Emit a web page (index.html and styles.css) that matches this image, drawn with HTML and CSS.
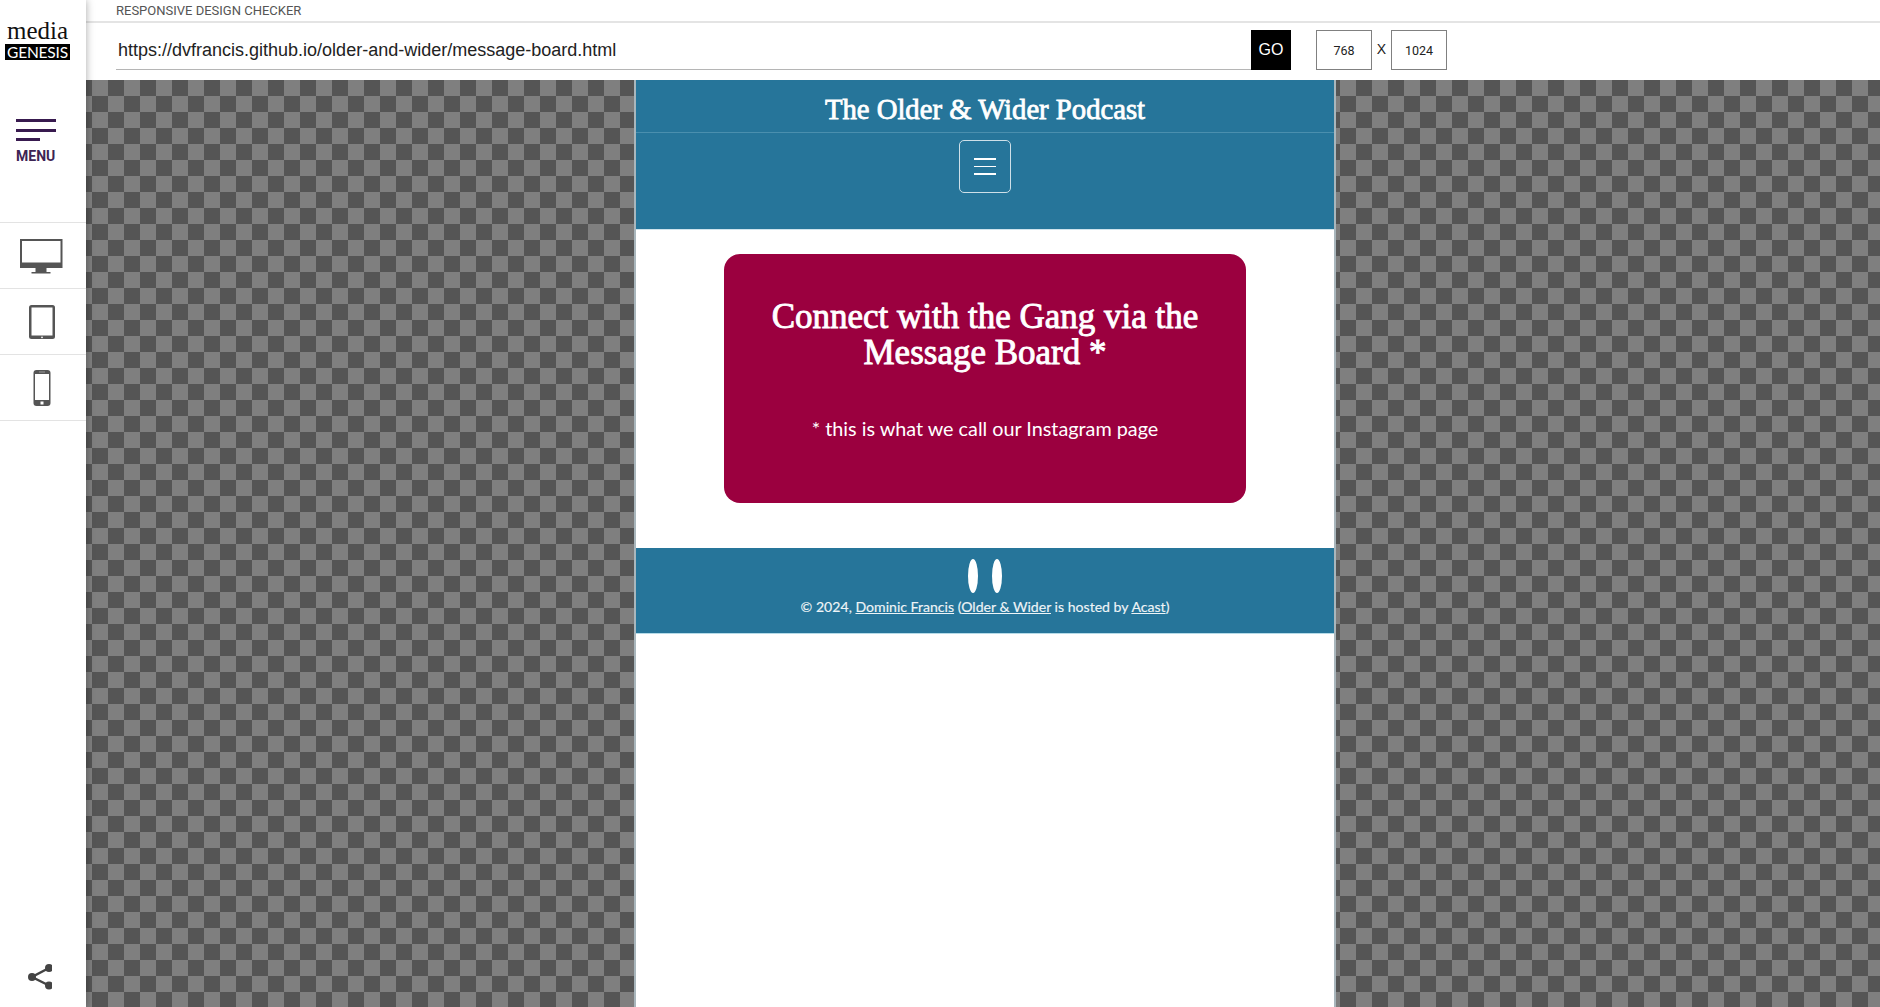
FILE: index.html
```html
<!DOCTYPE html>
<html lang="en">
<head>
<meta charset="utf-8">
<title>Responsive Design Checker</title>
<link rel="stylesheet" href="styles.css">
</head>
<body>
<div class="app">
  <aside class="sidebar">
    <div class="logo">
      <div class="logo-media">media</div>
      <div class="logo-genesis">GENESIS</div>
    </div>
    <button class="menu" type="button">
      <span class="bar"></span>
      <span class="bar"></span>
      <span class="bar short"></span>
      <span class="menu-label">MENU</span>
    </button>
    <nav class="devices">
      <div class="device">
        <svg width="44" height="38" viewBox="1 -1 44 38"><path fill="#555" d="M1 1h42.500v29H27.500v4h4v1.500h-19V34h4v-4H1z"/><path fill="#fff" d="M3 3h38.500v21.500H3z"/></svg>
      </div>
      <div class="device">
        <svg width="28" height="36" viewBox="0 0 28 36"><rect x="1" y="1" width="26" height="34" rx="2.500" fill="#555"/><rect x="3.500" y="3.500" width="21" height="28" fill="#fff"/><circle cx="14" cy="33.300" r="0.900" fill="#fff"/></svg>
      </div>
      <div class="device">
        <svg width="20" height="38" viewBox="0 0 20 38"><rect x="1.500" y="1" width="17" height="36" rx="3" fill="#555"/><rect x="3" y="5" width="14" height="26" fill="#fff"/><rect x="7" y="2.500" width="6" height="1" fill="#999"/><rect x="8.500" y="32.500" width="3" height="3" fill="#fff"/></svg>
      </div>
    </nav>
    <div class="share">
      <svg width="24" height="26" viewBox="0 0 24 26"><path fill="none" stroke="#444" stroke-width="2.500" d="M21 4 4 13 21 21.500"/><circle cx="21" cy="4" r="4" fill="#444"/><circle cx="4" cy="13" r="4" fill="#444"/><circle cx="21" cy="21.500" r="4" fill="#444"/></svg>
    </div>
  </aside>
  <main class="main">
    <header class="toolbar">
      <div class="title-row">RESPONSIVE DESIGN CHECKER</div>
      <div class="url-row">
        <div class="url">https://dvfrancis.github.io/older-and-wider/message-board.html</div>
        <button class="go" type="button">GO</button>
        <div class="size">768</div>
        <span class="times">X</span>
        <div class="size">1024</div>
      </div>
    </header>
    <section class="canvas">
      <div class="frame">
        <div class="site-header">
          <div class="site-title">The Older &amp; Wider Podcast</div>
          <div class="site-nav">
            <div class="toggler">
              <span></span><span></span><span></span>
            </div>
          </div>
        </div>
        <div class="site-body">
          <div class="card">
            <h1 class="card-title">Connect with the Gang via the Message Board *</h1>
            <p class="card-note">* this is what we call our Instagram page</p>
          </div>
        </div>
        <footer class="site-footer">
          <div class="ovals"><span></span><span></span></div>
          <p class="copy">© 2024, <a href="#">Dominic Francis</a> (<a href="#">Older &amp; Wider</a> is hosted by <a href="#">Acast</a>)</p>
        </footer>
      </div>
    </section>
  </main>
</div>
</body>
</html>
```
FILE: styles.css
```css
* { box-sizing: border-box; }
html, body { margin: 0; height: 100%; overflow: hidden; background: #fff; }
.app { display: flex; height: 1007px; }

.sidebar {
  width: 86px; flex: none; display: flex; flex-direction: column;
  background: #fff; box-shadow: 0 0 8px rgba(0,0,0,.35); z-index: 2;
}
.logo { padding: 18px 0 0 5px; height: 115px; }
.logo-media { font: 25px/26px "Liberation Serif", serif; color: #111; width: 65px; text-align: center; }
.logo-genesis {
  width: 65px; height: 16px; background: #000; color: #fff; text-align: center;
  font: 15.500px/16px "Lato", sans-serif; letter-spacing: -.2px;
}
.menu {
  display: flex; flex-direction: column; align-items: flex-start; padding: 0 0 0 16px; margin: 4px 0 0;
  border: 0; background: none; height: 103px;
}
.bar { display: block; width: 40px; height: 3px; background: #381a4f; margin-bottom: 6.500px; }
.bar.short { width: 24px; margin-bottom: 0; }
.menu-label { font: 700 14px/16px "Roboto", sans-serif; color: #3d2454; margin-top: 7px; }
.devices { border-top: 1px solid #e3e3e3; }
.device {
  height: 66px; border-bottom: 1px solid #e3e3e3; display: flex; align-items: center; justify-content: center;
  padding-right: 3px;
}
.device svg { display: block; }
.share { margin-top: auto; padding: 0 0 17px 28px; }
.share svg { display: block; }

.main { flex: 1; min-width: 0; display: flex; flex-direction: column; }
.toolbar { height: 80px; flex: none; background: #fff; }
.title-row {
  height: 23px; padding: 4px 0 0 30px; border-bottom: 2px solid #e4e4e4;
  font: 13px/14px "Roboto", sans-serif; color: #555;
}
.url-row { display: flex; align-items: flex-start; padding: 7px 0 0 30px; }
.url {
  width: 1135px; height: 40px; border-bottom: 1px solid #b5b5b5; padding-left: 2px;
  font: 18px/40px "Liberation Sans", sans-serif; color: #222;
}
.go {
  width: 40px; height: 40px; margin: 0 25px 0 0; padding: 0; border: 0; background: #000; color: #fff;
  font: 16px "Liberation Sans", sans-serif;
}
.size {
  width: 56px; height: 40px; border: 1px solid #808080; text-align: center; color: #222;
  font: 12.500px/40px "Roboto", sans-serif;
}
.times { width: 19px; text-align: center; font: 14px/38px "Liberation Sans", sans-serif; color: #222; }

.canvas {
  flex: 1; min-height: 0; overflow: hidden; display: flex; justify-content: center; padding-left: 4px;
  background: conic-gradient(#555 25%, #7f7f7f 0 50%, #555 0 75%, #7f7f7f 0) 6px 0 / 32px 32px;
}
.frame {
  width: 702px; background: #fff;
  border-left: 2px solid #a9b6bc; border-right: 2px solid #a9b6bc;
}
.site-header { height: 150px; background: #26759a; border-bottom: 1px solid #cfe3ec; }
.site-title {
  height: 53px; border-bottom: 1px solid #4a8fae; text-align: center; color: #fff;
  font: 400 28.700px/59px "Liberation Serif", serif; -webkit-text-stroke: .8px #fff;
}
.site-nav { display: flex; justify-content: center; padding-top: 7px; }
.toggler {
  width: 52px; height: 53px; border: 1px solid #cfe0e8; border-radius: 5px;
  display: flex; flex-direction: column; align-items: center; justify-content: center; gap: 6px;
}
.toggler span { display: block; width: 22px; height: 1.500px; background: #fff; }
.site-body { height: 318px; padding: 24px 0 0 88px; }
.card {
  width: 522px; height: 249px; background: #9b003f; border-radius: 16px; color: #fff; text-align: center;
  padding: 45px 30px 0;
}
.card-title { margin: 0; font: 400 35px/36px "Liberation Serif", serif; -webkit-text-stroke: .9px #fff; }
.card-note { margin: 43px 0 0; font: 19.800px/28px "Lato", sans-serif; }
.site-footer { height: 86px; background: #26759a; text-align: center; color: #fff; border-bottom: 1px solid #b5dbe8; padding-top: 11px; }
.ovals { display: flex; justify-content: center; gap: 14px; }
.ovals span { display: block; width: 10px; height: 34px; border-radius: 50%; background: #fff; }
.copy { margin: 4px 0 0; font: 14.100px/20px "Lato", sans-serif; color: #eef4f7; -webkit-text-stroke: .15px #eef4f7; }
.copy a { color: #eef4f7; }
```
